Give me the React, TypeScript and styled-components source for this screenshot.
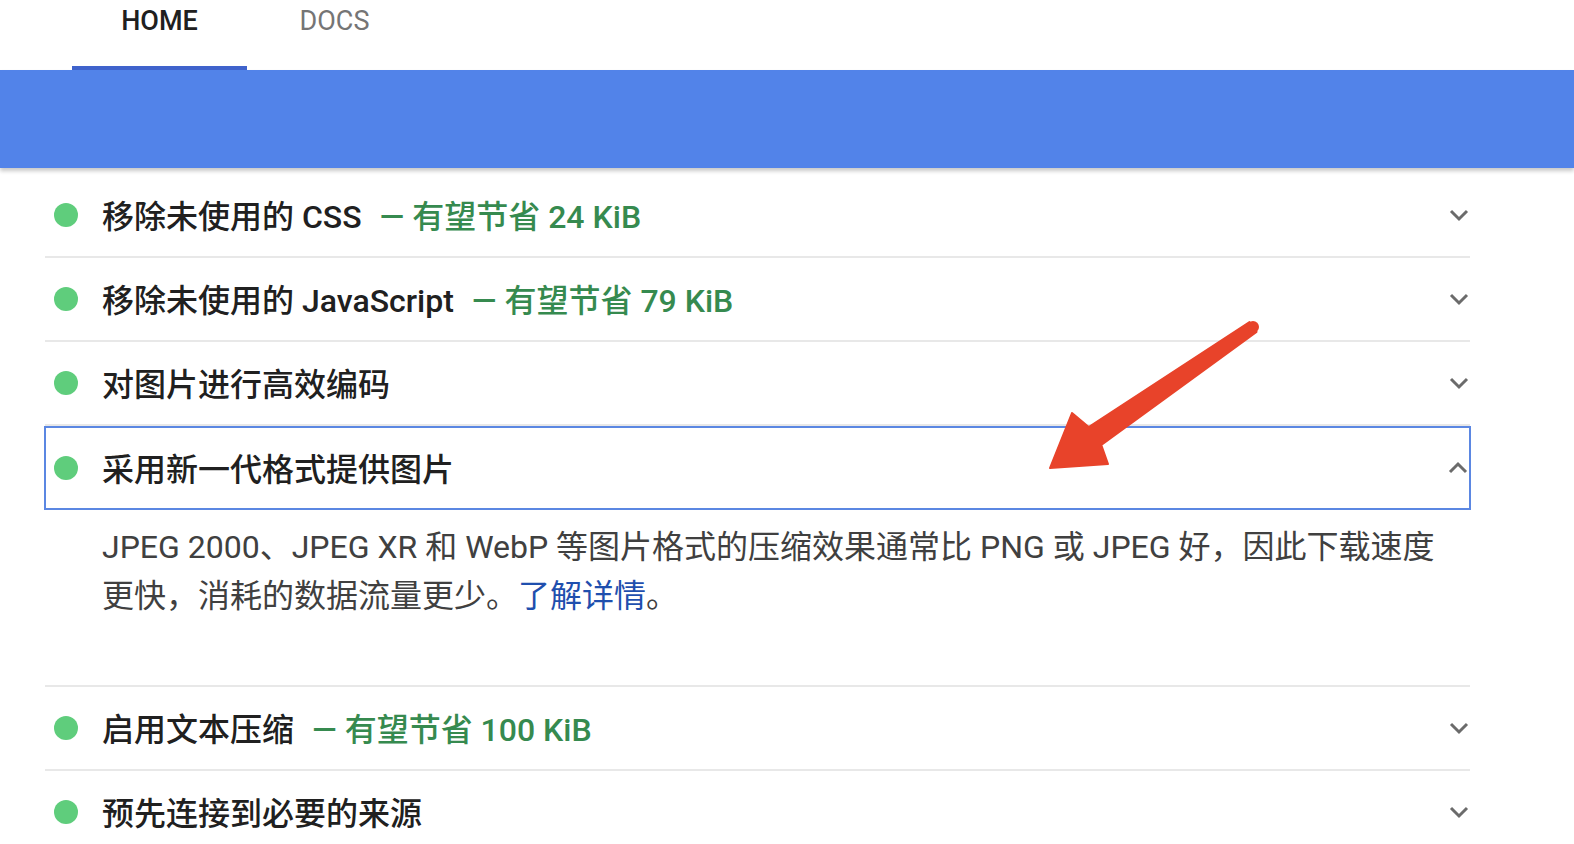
import React from 'react';
import styled, { createGlobalStyle } from 'styled-components';

const GlobalStyle = createGlobalStyle`
  html, body {
    margin: 0;
    padding: 0;
    background: #fff;
    font-family: Roboto, "Noto Sans CJK SC", sans-serif;
  }
`;

const Page = styled.div`
  position: relative;
  width: 1574px;
  height: 844px;
  overflow: hidden;
  background: #fff;
`;

const Nav = styled.nav`
  display: flex;
  height: 70px;
  padding-left: 72px;
  background: #fff;
`;

const Tab = styled.div<{ $active?: boolean }>`
  width: 175px;
  height: 70px;
  display: flex;
  justify-content: center;
  padding-top: 5px;
  box-sizing: border-box;
  font-size: 27px;
  font-weight: ${({ $active }) => ($active ? 500 : 400)};
  color: ${({ $active }) => ($active ? '#202020' : '#757575')};
  border-bottom: 4px solid ${({ $active }) => ($active ? '#3f63cc' : 'transparent')};
`;

const Band = styled.div`
  height: 98px;
  background: #5283e9;
  box-shadow: 0 3px 4px rgba(0, 0, 0, 0.22);
`;

const List = styled.div`
  width: 1425px;
  margin: 6px 0 0 45px;
`;

const Row = styled.div<{ $open?: boolean }>`
  display: flex;
  align-items: center;
  height: 84px;
  box-sizing: border-box;
  padding: 0 0 0 9px;
  border-bottom: 2px solid #e8e8e8;
  ${({ $open }) =>
    $open &&
    `
    border: 2px solid #5b87e2;
    margin-left: -1px;
    margin-right: -1px;
    padding-left: 8px;
  `}
`;

const Dot = styled.span`
  width: 24px;
  height: 24px;
  border-radius: 50%;
  background: #5fcd7c;
  flex-shrink: 0;
  margin-right: 24px;
`;

const Title = styled.span`
  flex: 1;
  font-size: 32px;
  font-weight: 500;
  color: #202020;
  white-space: nowrap;
  margin-top: -2px;
`;

const Savings = styled.span`
  color: #368a4f;
  margin-left: 18px;
`;

const Chevron = styled.svg`
  width: 22px;
  height: 14px;
  flex-shrink: 0;
`;

const Description = styled.div`
  padding: 13px 20px 64px 57px;
  font-size: 32px;
  line-height: 49px;
  color: #404040;
  white-space: nowrap;
  border-bottom: 2px solid #e8e8e8;
`;

const Link = styled.a`
  color: #1f4fae;
  text-decoration: none;
`;

const Overlay = styled.svg`
  position: absolute;
  top: 0;
  left: 0;
  pointer-events: none;
`;

type Audit = { title: string; savings?: string; open?: boolean };

const audits: Audit[] = [
  { title: '移除未使用的 CSS', savings: '有望节省 24 KiB' },
  { title: '移除未使用的 JavaScript', savings: '有望节省 79 KiB' },
  { title: '对图片进行高效编码' },
  { title: '采用新一代格式提供图片', open: true },
  { title: '启用文本压缩', savings: '有望节省 100 KiB' },
  { title: '预先连接到必要的来源' },
];

function ChevronIcon({ up }: { up?: boolean }) {
  return (
    <Chevron viewBox="0 0 22 14">
      <polyline
        points={up ? '3,11 11,3 19,11' : '3,3 11,11 19,3'}
        fill="none"
        stroke="#6b6b6b"
        strokeWidth="3"
      />
    </Chevron>
  );
}

export default function App() {
  return (
    <Page>
      <GlobalStyle />
      <Nav>
        <Tab $active>HOME</Tab>
        <Tab>DOCS</Tab>
      </Nav>
      <Band />
      <List>
        {audits.map((a) => (
          <React.Fragment key={a.title}>
            <Row $open={a.open}>
              <Dot />
              <Title>
                {a.title}
                {a.savings && <Savings>— {a.savings}</Savings>}
              </Title>
              <ChevronIcon up={a.open} />
            </Row>
            {a.open && (
              <Description>
                JPEG 2000、JPEG XR 和 WebP 等图片格式的压缩效果通常比 PNG 或 JPEG 好，因此下载速度
                <br />
                更快，消耗的数据流量更少。<Link href="#">了解详情</Link>。
              </Description>
            )}
          </React.Fragment>
        ))}
      </List>
      <Overlay width="1574" height="844" viewBox="0 0 1574 844">
        <polygon
          points="1249.5,322.1 1088.7,427 1072,413 1050,468 1108,464 1101.3,445 1256.5,331.9"
          fill="#e8432a"
          stroke="#e8432a"
          strokeWidth="2"
          strokeLinejoin="round"
        />
        <circle cx="1253" cy="327" r="6" fill="#e8432a" />
      </Overlay>
    </Page>
  );
}
